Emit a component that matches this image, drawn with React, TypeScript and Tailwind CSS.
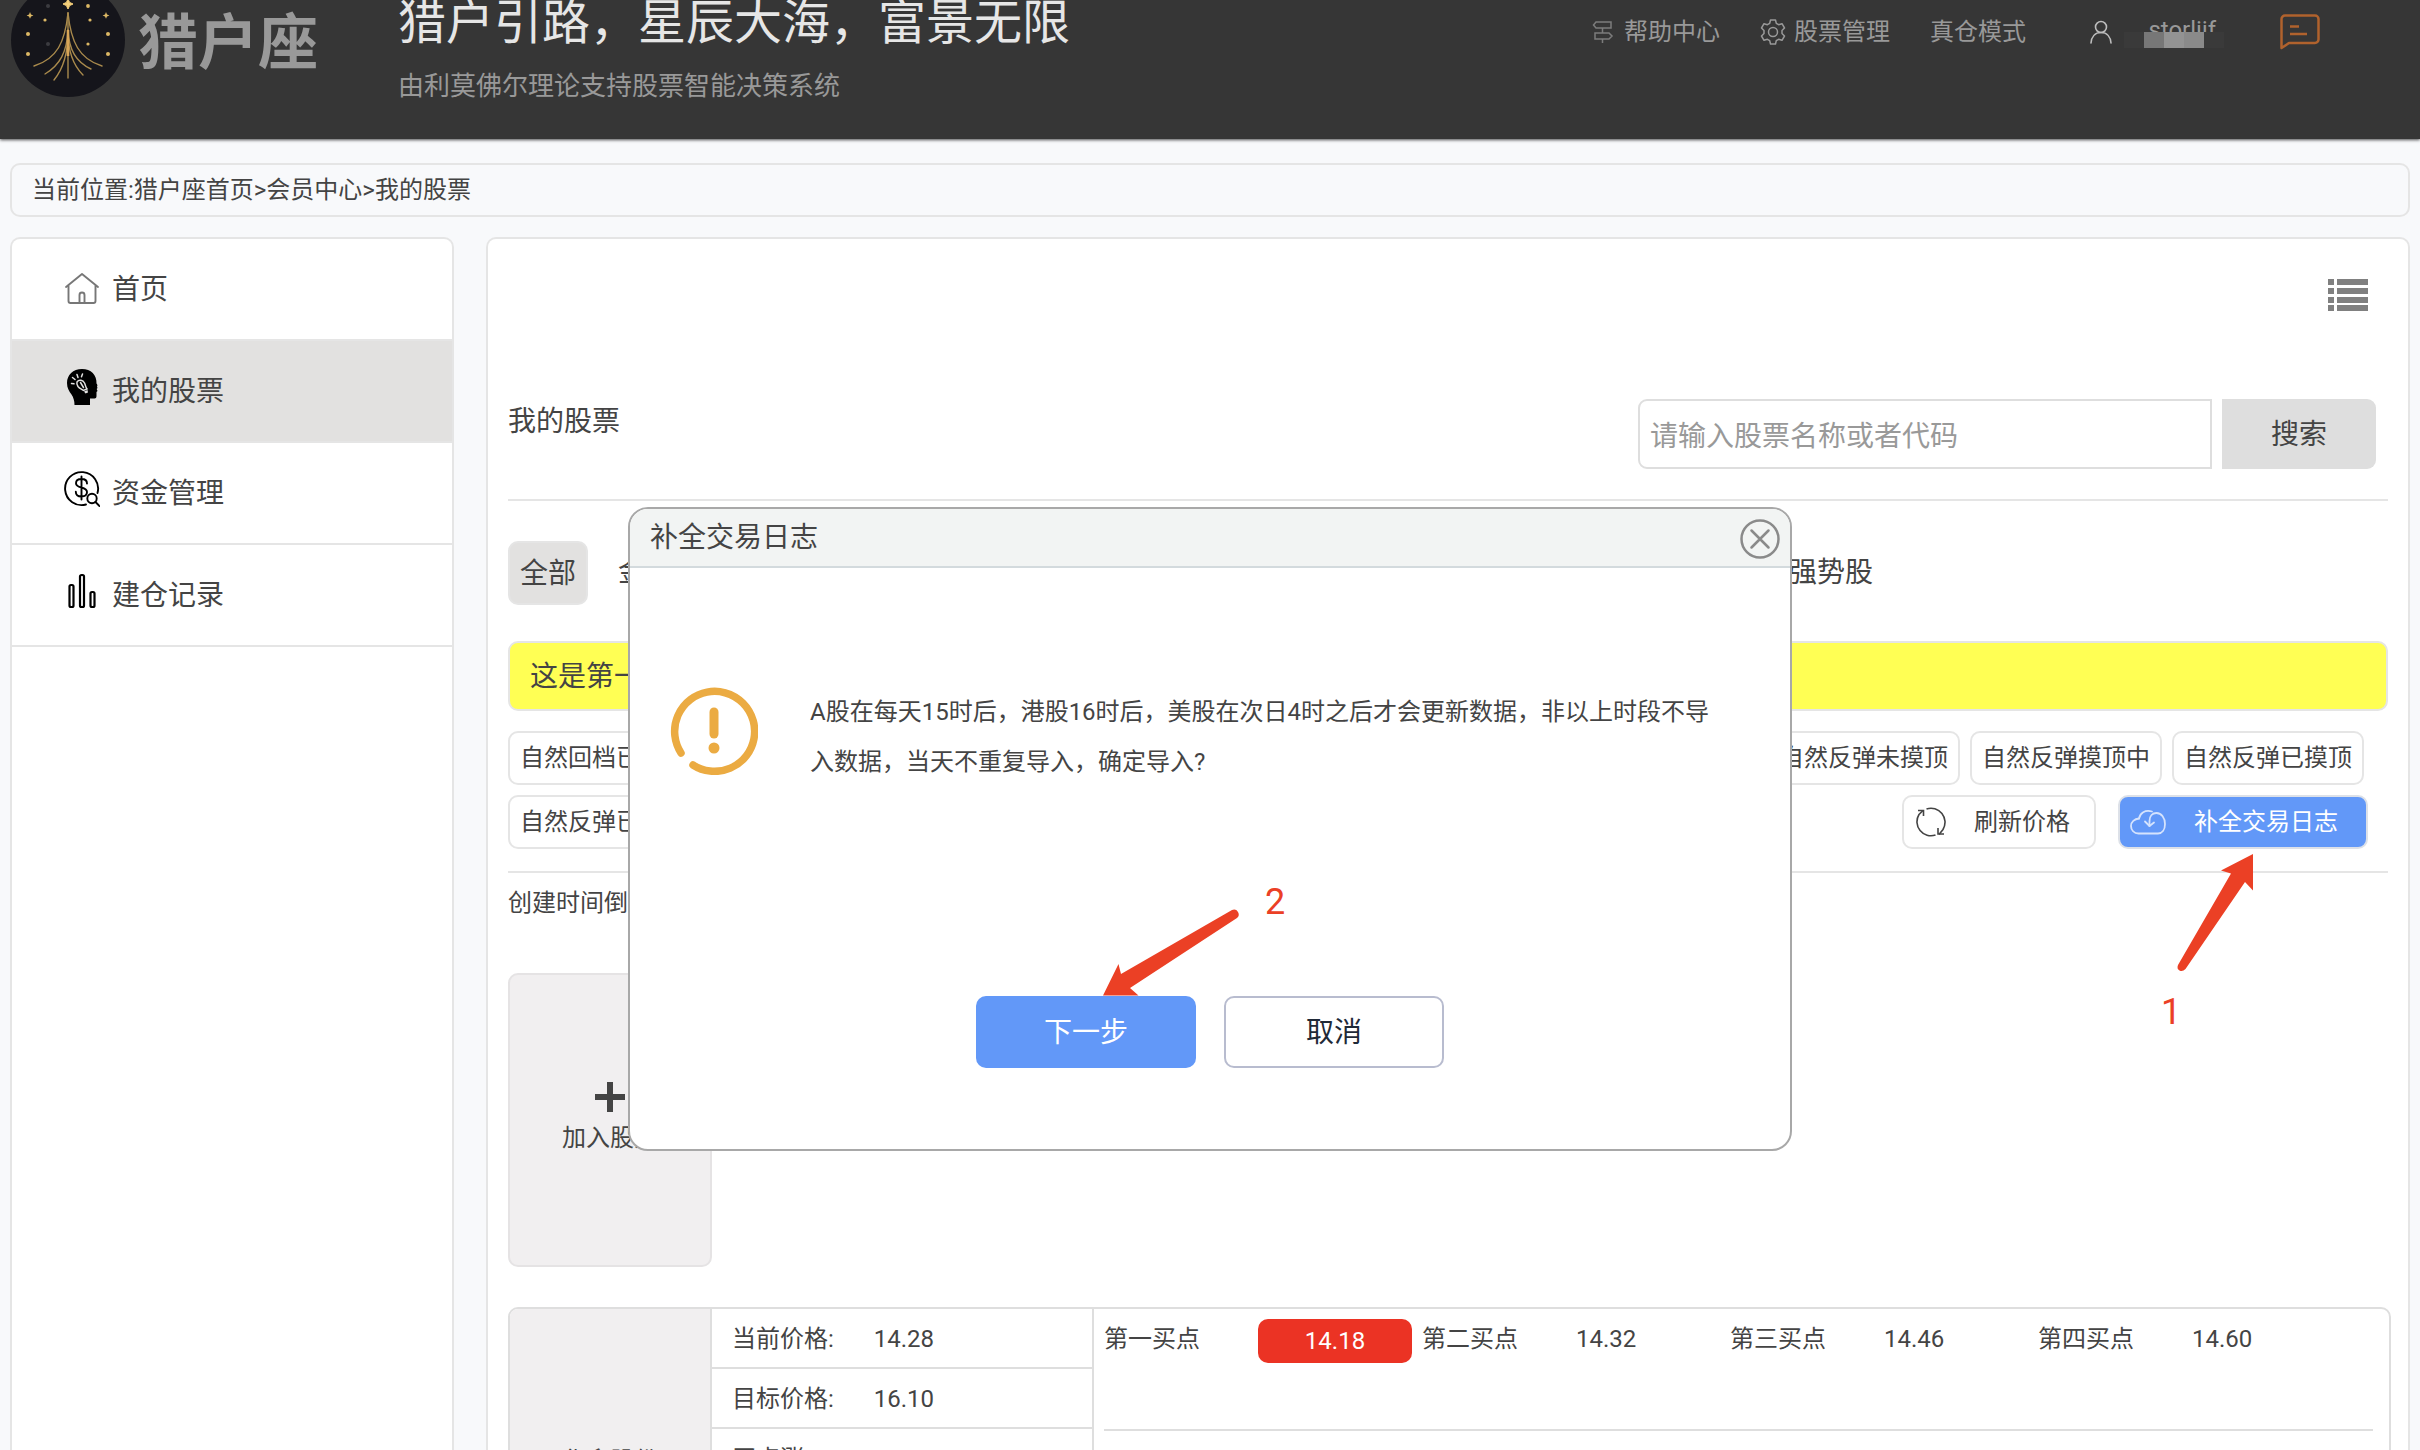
import { FormEvent, ReactNode, useState } from 'react';
import clsx from 'clsx';

const tabs = ['全部', '金叉股'];

const chips = [
  '自然回档已探底',
  '自然回档未探底',
  '自然回档探底中',
  '上升趋势未突破',
  '上升趋势已突破',
  '上升趋势突破关键点',
  '自然反弹未摸顶',
  '自然反弹摸顶中',
  '自然反弹已摸顶',
  '自然反弹已突破',
];

const prices = [
  { label: '当前价格:', value: '14.28' },
  { label: '目标价格:', value: '16.10' },
  { label: '买点涨:', value: '0.70%' },
];

const buyPoints = [
  { label: '第一买点', value: '14.18', active: true },
  { label: '第二买点', value: '14.32' },
  { label: '第三买点', value: '14.46' },
  { label: '第四买点', value: '14.60' },
];

const Logo = () => (
  <svg className="-mt-[18px] size-[116px] shrink-0" viewBox="0 0 116 116" fill="none">
    <circle cx="58" cy="58" r="57" fill="#15151b" />
    <path d="M58 17l1.6 3.4 3.4 1.6-3.4 1.6L58 27l-1.6-3.4L53 22l3.4-1.6z" fill="#f4cf7a" stroke="#f4cf7a" />
    <g stroke="#a98a4c" strokeWidth="1.4" strokeLinecap="round">
      <path d="M58 31C55 60 47 77 24 84" />
      <path d="M58 31C61 60 69 77 92 84" />
      <path d="M58 48C57 70 50 83 35 92" />
      <path d="M58 48C59 68 66 80 81 87" />
      <path d="M58 50C58 72 53 87 44 98" />
      <path d="M58 50C58 70 64 84 73 93" />
      <path d="M58 31V96" />
    </g>
    <path d="M58 48v26" stroke="#d8a557" strokeWidth="2.6" />
    <g fill="#dcb865">
      <circle cx="78" cy="24" r="1.9" />
      <circle cx="80" cy="38" r="1.6" />
      <circle cx="35" cy="38" r="1.6" />
      <circle cx="18" cy="52" r="2" />
      <circle cx="98" cy="52" r="2" />
      <circle cx="18" cy="72" r="2" />
      <circle cx="98" cy="72" r="2" />
      <circle cx="78" cy="62" r="1.6" />
      <path d="M20 30l1 2.4 2.4 1-2.4 1-1 2.4-1-2.4-2.4-1 2.4-1zM96 30l1 2.4 2.4 1-2.4 1-1 2.4-1-2.4-2.4-1 2.4-1z" />
    </g>
    <circle cx="38" cy="24" r="2" fill="#3b3b40" />
    <circle cx="38" cy="62" r="2" fill="#3b3b40" />
  </svg>
);

const SignIcon = () => (
  <svg className="h-6 w-[22px]" viewBox="0 0 22 24" fill="none" stroke="#7c7c7c" strokeWidth="1.5">
    <path d="M4 2h15v6H4L1.500 5zM10.500 8v5M3 13h14l3 3-3 3H3zM10.500 19v4" />
  </svg>
);

const GearIcon = () => (
  <svg className="size-[26px]" viewBox="0 0 26 26" fill="none" stroke="#999" strokeWidth="1.500" strokeLinejoin="round">
    <path d="M10.500 1h5l.8 3.400 2.300 1.300 3.400-1 2.500 4.300-2.500 2.500v3l2.500 2.500-2.500 4.300-3.400-1-2.300 1.300-.8 3.400h-5l-.8-3.400-2.300-1.300-3.400 1L1.500 17 4 14.500v-3L1.500 9 4 4.700l3.400 1 2.300-1.300z" />
    <circle cx="13" cy="13" r="4.500" />
  </svg>
);

const UserIcon = () => (
  <svg className="h-6 w-[22px]" viewBox="0 0 22 24" fill="none" stroke="#bdbdbd" strokeWidth="1.600" strokeLinecap="round">
    <circle cx="11" cy="7" r="5.500" />
    <path d="M1 23c.5-6 4-10.500 10-10.500S20.500 17 21 23" />
  </svg>
);

const MessageIcon = () => (
  <svg className="h-9 w-10" viewBox="0 0 40 36" fill="none" stroke="#b0622d" strokeWidth="2.500" strokeLinejoin="round">
    <path d="M1.500 34V5a3.500 3.500 0 013.500-3.500h30A3.500 3.500 0 0138.500 5v20.500A3.500 3.500 0 0135 29H9z" />
    <path d="M10 12.500h9M10 20h17" />
  </svg>
);

const HomeIcon = () => (
  <svg className="size-9" viewBox="0 0 36 36" fill="none" stroke="#777" strokeWidth="1.900" strokeLinecap="round" strokeLinejoin="round">
    <path d="M2 16L18 3l16 13M4.500 14.500V30a2 2 0 002 2h23a2 2 0 002-2V14.500" />
    <path d="M15.500 32v-8a2.500 2.500 0 015 0v8" />
  </svg>
);

const HeadIcon = () => (
  <svg className="-mt-2 size-9" viewBox="0 0 36 36">
    <path
      d="M18 0C9 0 3 6 3 14c0 5 2 8 4.500 11.500 2 3 3 6.500 3 10.500H26v-6.500h4.500c1.500 0 2-1 2-2.500v-4l1-1-.8-2 .8-1-.5-1.500c.8-1 .3-2-.5-3C33 6 27 0 18 0z"
      fill="#000"
    />
    <g fill="none" stroke="#e2e1e0" strokeWidth="1.500" strokeLinecap="round">
      <path d="M13 13c2-3 6-2 7.500 1 1 2 1 4 2.500 6l-3.500 1.500c-2-1.500-4-2-5.500-4-1-1.500-1.500-3-1-4.500z" />
      <path d="M16.500 13.500l3 5M7.500 14.500l2.500.3M8.500 8.500l2.500 2M13 5.500l1 3M18.500 5l-1 2.800" />
    </g>
    <path d="M20 22.500l3.500-1.500.5 2.500-2.500 1z" fill="#e2e1e0" />
  </svg>
);

const FundIcon = () => (
  <svg className="-mt-2 size-9" viewBox="0 0 36 36" fill="none" stroke="#000" strokeWidth="1.900" strokeLinecap="round">
    <path d="M22 33.500A16.500 16.500 0 1133.500 22" />
    <path d="M23 12.500c0-3-2.200-4.500-5.500-4.500S12 9.700 12 12.200c0 5.800 11 2.800 11 8.800 0 2.800-2.200 4.500-5.500 4.500s-5.700-1.800-5.700-4.800M17.500 5.500v23" />
    <circle cx="28" cy="27.500" r="4.700" />
    <path d="M31.500 31l4 4" />
  </svg>
);

const BarsIcon = () => (
  <svg className="-mt-2 size-9" viewBox="0 0 36 36" fill="none" stroke="#000" strokeWidth="2.200">
    <rect x="5.500" y="12" width="4" height="22" rx="1.500" />
    <rect x="16" y="2" width="4" height="32" rx="1.500" />
    <rect x="26.500" y="19" width="4" height="15" rx="1.500" />
  </svg>
);

const ListIcon = () => (
  <svg className="h-8 w-10" viewBox="0 0 40 32" fill="#808080">
    {[0, 9, 18, 26].map((y) => (
      <path key={y} d={`M0 ${y}h6v6H0zM9 ${y}h31v6H9z`} />
    ))}
  </svg>
);

const RefreshIcon = () => (
  <svg className="size-[30px]" viewBox="0 0 30 30" fill="none" stroke="#444" strokeWidth="1.600">
    <path d="M10.500 2A14 14 0 0127 22.500l-4 5M19.500 28A14 14 0 013 7.500l4-4" />
    <path d="M2 3.500h5.500V9M28 27h-6v-6" />
  </svg>
);

const CloudIcon = () => (
  <svg className="h-[26px] w-9" viewBox="0 0 36 26" fill="none" stroke="#d5e3fd" strokeWidth="1.800" strokeLinecap="round" strokeLinejoin="round">
    <path d="M9 9.500C10 4 15 .5 22 2.500" />
    <path d="M9 9.500c-4.500.5-8 3.500-8 7.500s3 7.500 7.500 7.500H28c4 0 7-3.500 7-9.500S31.500 4 26.500 4c-4 0-7 3-7 8v5" />
    <path d="M15 12.500l4.500 4.500 4.500-3.500" />
  </svg>
);

const WarningIcon = () => (
  <svg className="size-[88px] shrink-0" viewBox="0 0 88 88" fill="none" stroke="#ebab42" strokeLinecap="round">
    <path d="M11 66A40 40 0 1123 78" strokeWidth="7.500" />
    <path d="M44 25v22" strokeWidth="9" />
    <circle cx="44" cy="61" r="5.500" fill="#ebab42" stroke="none" />
  </svg>
);

const CloseIcon = () => (
  <svg className="size-10" viewBox="0 0 40 40" fill="none" stroke="#8a8a8a" strokeWidth="2.500" strokeLinecap="round">
    <circle cx="20" cy="20" r="18.500" />
    <path d="M11.500 11.500l17 17M28.500 11.500l-17 17" />
  </svg>
);

const menus: { label: string; icon: ReactNode; active?: boolean }[] = [
  { label: '首页', icon: <HomeIcon /> },
  { label: '我的股票', icon: <HeadIcon />, active: true },
  { label: '资金管理', icon: <FundIcon /> },
  { label: '建仓记录', icon: <BarsIcon /> },
];

const Header = () => (
  <header className="relative flex h-[139px] shrink-0 items-start bg-[#363636] pl-2.5 text-[#999] shadow-[0_1px_3px_rgba(0,0,0,0.7)]">
    <Logo />
    <div className="ml-3 w-[260px] text-[60px] leading-[88px] font-bold">猎户座</div>
    <div className="-mt-2">
      <h1 className="text-5xl leading-[62px] text-[#e6e6e6]">猎户引路，星辰大海，富景无限</h1>
      <p className="mt-3.5 text-[26px] leading-9">由利莫佛尔理论支持股票智能决策系统</p>
    </div>
    <nav className="mt-3.5 mr-[100px] ml-auto flex items-center text-2xl leading-9">
      <a href="#help" className="flex items-center gap-2.5">
        <SignIcon />
        帮助中心
      </a>
      <a href="#manage" className="ml-10 flex items-center gap-2">
        <GearIcon />
        股票管理
      </a>
      <a href="#mode" className="ml-10">
        真仓模式
      </a>
      <a href="#user" className="ml-16 flex items-center gap-3">
        <UserIcon />
        <span className="relative block h-9 w-[100px] text-right">
          <span className="block pr-2 leading-8">storlijf</span>
          <span className="absolute inset-x-0 top-[18px] flex h-4 bg-[#3a3a3a]">
            <span className="w-5" />
            <span className="w-5 bg-[#777]" />
            <span className="w-5 bg-[#939393]" />
            <span className="w-5 bg-[#8a8a8a]" />
          </span>
        </span>
      </a>
      <button type="button" className="ml-14" aria-label="消息">
        <MessageIcon />
      </button>
    </nav>
  </header>
);

const Sidebar = () => (
  <aside className="w-[444px] shrink-0 overflow-hidden rounded-t-[10px] border-2 border-b-0 border-[#e5e5e5] bg-white">
    {menus.map(({ label, icon, active }) => (
      <a
        key={label}
        href="#menu"
        className={clsx(
          'flex h-[102px] items-center gap-3 border-b-2 border-[#e5e5e5] pl-[52px] text-[28px]',
          active && 'bg-[#e2e1e0]',
        )}
      >
        {icon}
        <span className="pt-0.5">{label}</span>
      </a>
    ))}
  </aside>
);

const SearchForm = () => {
  const [keyword, setKeyword] = useState('');
  const onSubmit = (e: FormEvent) => {
    e.preventDefault();
  };

  return (
    <form className="flex gap-2.5 text-[28px]" onSubmit={onSubmit}>
      <input
        className="h-[70px] w-[574px] rounded-l-[9px] border-2 border-[#dedede] px-2.5 pt-1 placeholder:text-[#999]"
        type="text"
        aria-label="股票名称或者代码"
        placeholder="请输入股票名称或者代码"
        value={keyword}
        onChange={(e) => setKeyword(e.target.value)}
      />
      <button className="h-[70px] w-[154px] rounded-r-[9px] bg-[#dedede] pt-0.5" type="submit">
        搜索
      </button>
    </form>
  );
};

const Chip = ({ label }: { label: string }) => (
  <button type="button" className="h-[54px] rounded-[10px] border-2 border-[#e5e5e5] px-2.5 whitespace-nowrap">
    {label}
  </button>
);

const StockCard = () => (
  <section className="-mr-[3px] mt-10 flex h-[420px] shrink-0 overflow-hidden rounded-[10px] border-2 border-[#dedede]">
    <div className="flex w-[202px] shrink-0 items-start justify-center border-r-2 border-[#dedede] bg-[#f1eff0] pt-[134px] leading-9">
      华鑫股份
    </div>
    <dl className="w-[382px] shrink-0 border-r-2 border-[#dedede]">
      {prices.map(({ label, value }) => (
        <div key={label} className="flex h-[60px] items-center gap-10 border-b-2 border-[#dedede] pt-0.5 pl-5">
          <dt>{label}</dt>
          <dd>{value}</dd>
        </div>
      ))}
    </dl>
    <div className="flex-1 pr-4 pl-2.5">
      <dl className="flex h-[122px] items-start border-b-2 border-[#dedede] pt-2.5">
        {buyPoints.map(({ label, value, active }) => (
          <div key={label} className={clsx('flex', active && 'mr-2.5')}>
            <dt className="w-[154px] leading-10">{label}</dt>
            <dd
              className={clsx(
                'w-[154px]',
                active ? 'rounded-[10px] bg-[#eb3324] text-center leading-[44px] text-white' : 'leading-10',
              )}
            >
              {value}
            </dd>
          </div>
        ))}
      </dl>
    </div>
  </section>
);

const ImportDialog = ({ onClose }: { onClose: () => void }) => (
  <div className="absolute inset-x-0 top-[507px] flex justify-center">
    <div
      role="dialog"
      aria-labelledby="dialog-title"
      className="w-[1164px] rounded-[20px] border-2 border-[#a8a8a8] bg-white"
    >
      <div className="flex h-[59px] items-center justify-between rounded-t-[18px] border-b-2 border-[#d3dadd] bg-[#f2f4f3] pr-2.5 pl-5 text-[28px]">
        <h2 id="dialog-title">补全交易日志</h2>
        <button type="button" aria-label="关闭" className="pt-0.5" onClick={onClose}>
          <CloseIcon />
        </button>
      </div>
      <div className="flex gap-[52px] pt-[119px] pr-[70px] pl-10">
        <WarningIcon />
        <p className="flex-1 text-2xl leading-[50px]">
          A股在每天15时后，港股16时后，美股在次日4时之后才会更新数据，非以上时段不导入数据，当天不重复导入，确定导入?
        </p>
      </div>
      <div className="mt-[209px] mb-[81px] flex justify-center gap-7 text-[28px]">
        <div className="relative">
          <button type="button" className="h-[72px] w-[220px] rounded-[10px] bg-[#6298f8] pt-0.5 text-white">
            下一步
          </button>
          <svg className="absolute -top-[88px] left-[124px] h-[89px] w-[140px]" viewBox="0 0 140 89" fill="#eb4025">
            <path d="M3 87.500L18.500 56l2.500 10L132 2q4-1.500 6 2t-1 6L30 80l8.500 7.500z" />
          </svg>
          <span className="absolute -top-28 left-[289px] text-4xl leading-9 text-[#eb4025]">2</span>
        </div>
        <button
          type="button"
          className="h-[72px] w-[220px] rounded-[10px] border-2 border-[#b8bccf] pt-0.5 text-[#1f2937]"
          onClick={onClose}
        >
          取消
        </button>
      </div>
    </div>
  </div>
);

export default function App() {
  const [open, setOpen] = useState(true);

  return (
    <div
      lang="zh-CN"
      className="relative flex h-screen flex-col overflow-hidden bg-[#f8f9fb] font-[Roboto,'Noto_Sans_CJK_SC',sans-serif] text-2xl text-[#444]"
    >
      <Header />
      <div className="flex min-h-0 flex-1 flex-col px-2.5 pt-6">
        <div className="flex h-[54px] shrink-0 items-center rounded-[10px] border-2 border-[#e5e5e5] pl-5">
          当前位置:猎户座首页&gt;会员中心&gt;我的股票
        </div>
        <div className="mt-5 flex min-h-0 flex-1 gap-8">
          <Sidebar />
          <main className="flex min-w-0 flex-1 flex-col overflow-hidden rounded-t-[10px] border-2 border-b-0 border-[#e5e5e5] bg-white px-5 pt-10">
            <button type="button" className="mr-5 self-end" aria-label="列表">
              <ListIcon />
            </button>
            <div className="mt-[88px] flex items-start justify-between border-b-2 border-[#e5e5e5] pr-3 pb-[30px]">
              <h2 className="text-[28px] leading-[46px]">我的股票</h2>
              <SearchForm />
            </div>
            <div className="mt-10 flex h-16 shrink-0 items-center gap-5 text-[28px]">
              {tabs.map((tab, i) => (
                <button
                  key={tab}
                  type="button"
                  className={clsx(
                    'h-16 rounded-[10px] px-2.5 whitespace-nowrap',
                    i === 0 && 'border-2 border-[#e5e5e5] bg-[#e2e1e0] pt-0.5',
                  )}
                >
                  {tab}
                </button>
              ))}
              <button type="button" className="mr-[505px] ml-auto px-2.5">
                强势股
              </button>
            </div>
            <div className="mt-9 flex h-[70px] shrink-0 items-center rounded-[10px] border-2 border-[#e5e5e5] bg-[#ffff54] pt-0.5 pl-5 text-[28px]">
              这是第一
            </div>
            <div className="mt-5 flex flex-wrap gap-2.5 border-b-2 border-[#e5e5e5] pb-[22px]">
              {chips.map((chip) => (
                <Chip key={chip} label={chip} />
              ))}
              <div className="mr-5 ml-auto flex gap-[22px]">
                <button
                  type="button"
                  className="flex h-[54px] items-center gap-7 rounded-[10px] border-2 border-[#e5e5e5] pr-6 pl-3"
                >
                  <RefreshIcon />
                  刷新价格
                </button>
                <div className="relative">
                  <button
                    type="button"
                    className="flex h-[54px] items-center gap-7 rounded-[10px] border-2 border-[#dde1e8] bg-[#6298f8] pr-7 pl-2.5 text-white"
                    onClick={() => setOpen(true)}
                  >
                    <CloudIcon />
                    补全交易日志
                  </button>
                  <svg className="absolute top-[58px] left-[58px] h-[120px] w-20" viewBox="0 0 80 120" fill="#eb4025">
                    <path d="M77 1L45 17.500l10 3L2 112q-1.500 4 1.500 5.500t6-1.500L69 29l8 8.500z" />
                  </svg>
                  <span className="absolute top-[199px] left-[43px] text-4xl leading-9 text-[#eb4025]">1</span>
                </div>
              </div>
            </div>
            <button type="button" className="mt-3 self-start leading-9">
              创建时间倒序
            </button>
            <button
              type="button"
              className="mt-[52px] flex h-[294px] w-[204px] shrink-0 flex-col items-center rounded-[10px] border-2 border-[#e5e3e4] bg-[#f1eff0] pt-[107px]"
            >
              <svg className="size-[30px]" viewBox="0 0 30 30" stroke="#444" strokeWidth="6">
                <path d="M15 0v30M0 15h30" />
              </svg>
              <span className="mt-2 leading-9">加入股票</span>
            </button>
            <StockCard />
          </main>
        </div>
      </div>
      {open && <ImportDialog onClose={() => setOpen(false)} />}
    </div>
  );
}
